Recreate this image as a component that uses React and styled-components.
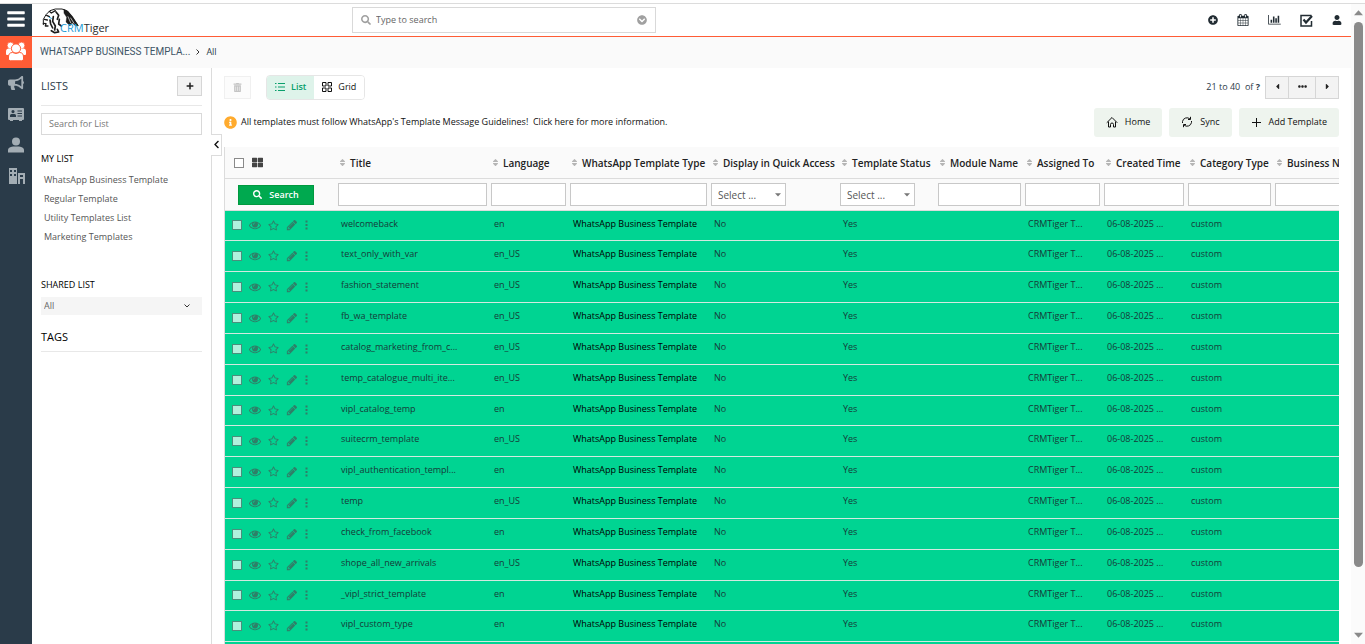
import React, { useState } from 'react';
import styled, { createGlobalStyle } from 'styled-components';
import {
    FaBullhorn, FaUser, FaSearch, FaChevronCircleDown, FaPlusCircle, FaPlus,
    FaChevronLeft, FaTrashAlt, FaInfoCircle, FaCaretLeft, FaCaretRight, FaEllipsisH,
    FaThLarge, FaSort, FaRegStar, FaBars,
} from 'react-icons/fa';

const GlobalStyle = createGlobalStyle`
    * {
        box-sizing: border-box;
    }

    body {
        margin: 0;
        font-family: "Open Sans", sans-serif;
        font-size: 9px;
        line-height: 12px;
        color: #2c3b49;
        background: #fff;
    }

    button, input, select {
        font: inherit;
        color: inherit;
        margin: 0;
        border-radius: 0;
    }

    button {
        padding: 0;
        cursor: pointer;
    }

    a {
        color: inherit;
        text-decoration: none;
    }

    svg {
        display: block;
        flex: none;
    }
`;

const Page = styled.div`
    height: 100vh;
    display: flex;
    padding-top: 3px;
    overflow: hidden;
`;

/* left rail */

const Rail = styled.nav`
    width: 32px;
    flex: none;
    border-top: 1px solid #dcdcdc;
    background: #2a3b49;
`;

const RailButton = styled.button`
    display: flex;
    align-items: center;
    justify-content: center;
    width: 32px;
    height: ${props => props.$tall ? '32px' : '31px'};
    padding-bottom: 2px;
    border: 0;
    font-size: ${props => props.$size || '16px'};
    color: ${props => props.$bright ? '#fff' : '#a3adb4'};
    background: ${props => props.$active ? '#ff5c35' : 'transparent'};
`;

const Shell = styled.div`
    flex: 1;
    min-width: 0;
    border-top: 1px solid #dcdcdc;
`;

/* header */

const TopBar = styled.header`
    display: flex;
    align-items: center;
    height: 33px;
    padding: 0 9px 0 8px;
    border-bottom: 1px solid #ff5c35;
`;

const LogoLink = styled.a`
    display: flex;
    align-items: flex-end;
    width: 312px;
    height: 32px;
    padding: 0 0 1px 2px;
`;

const LogoText = styled.span`
    margin-left: -19px;
    font-size: 11px;
    line-height: 14px;
    color: #2b2b2b;

    b {
        font-weight: 400;
        color: #1a9ad6;
    }
`;

const GlobalSearch = styled.label`
    display: flex;
    align-items: center;
    gap: 5px;
    width: 304px;
    height: 26px;
    padding: 0 8px;
    border: 1px solid #d9d9d9;
    color: #a0a0a0;
    font-size: 10px;

    input {
        flex: 1;
        min-width: 0;
        padding: 0;
        border: 0;
        outline: 0;
        font-size: 9px;
        color: #555;
    }

    input::placeholder {
        color: #666;
        opacity: 1;
    }
`;

const TopActions = styled.div`
    display: flex;
    align-items: center;
    gap: 19px;
    margin-left: auto;
`;

const IconButton = styled.button`
    display: flex;
    border: 0;
    background: none;
    color: ${props => props.$color || '#222c33'};
    font-size: ${props => props.$size || '10px'};
`;

const Breadcrumb = styled.div`
    display: flex;
    align-items: center;
    gap: 5px;
    height: 31px;
    padding: 0 8px 2px;
    background: #fafafa;
`;

const ModuleName = styled.h1`
    margin: 0;
    font-family: Roboto, "Open Sans", sans-serif;
    font-size: 10px;
    font-weight: 400;
    line-height: 16px;
    color: #3f5566;
`;

const Columns = styled.div`
    display: flex;
    align-items: stretch;
    height: 100%;
`;

/* lists panel */

const ListPanel = styled.aside`
    width: 180px;
    flex: none;
    padding: 8px 9px 0 9px;
    border-right: 1px solid #dcdcdc;
    position: relative;
`;

const PanelHead = styled.div`
    display: flex;
    align-items: center;
    justify-content: space-between;
    height: 30px;
    padding-bottom: 9px;
    border-bottom: 1px solid #e8e8e8;
    font-size: 11px;
`;

const AddListButton = styled.button`
    display: flex;
    align-items: center;
    justify-content: center;
    width: 25px;
    height: 20px;
    border: 1px solid #d6d6d6;
    background: #f3f3f3;
    color: #222;
    font-size: 8px;
`;

const ListSearch = styled.input`
    display: block;
    width: 100%;
    height: 22px;
    margin-top: 7px;
    padding: 0 7px 1px;
    border: 1px solid #d9d9d9;

    &::placeholder {
        color: #777;
        opacity: 1;
    }
`;

const PanelTitle = styled.h2`
    margin: ${props => props.$top} 0 0;
    font-size: ${props => props.$large ? '11px' : '9px'};
    font-weight: 400;
    line-height: 14px;
    color: #000;
`;

const Lists = styled.ul`
    margin: 4px 0 0;
    padding: 0 3px;
    list-style: none;
    color: #555;

    li {
        line-height: 19px;
    }
`;

const SharedSelect = styled.div`
    display: flex;
    align-items: center;
    height: 18px;
    margin-top: 5px;
    padding-right: 12px;
    background: #f5f5f5;
    color: #666;

    select {
        flex: 1;
        appearance: none;
        padding: 0 3px 1px;
        border: 0;
        background: none;
    }
`;

const Divider = styled.hr`
    margin: 7px 0 0;
    border: 0;
    border-top: 1px solid #e8e8e8;
`;

const CollapseButton = styled.button`
    position: absolute;
    top: 66px;
    right: -11px;
    display: flex;
    align-items: center;
    justify-content: center;
    width: 11px;
    height: 22px;
    padding-bottom: 2px;
    border: 1px solid #dcdcdc;
    border-left: 0;
    background: #fff;
    font-size: 9px;
    color: #111;
`;

/* content */

const Content = styled.main`
    flex: 1;
    min-width: 0;
    padding: 7px 12px 0 12px;
`;

const Toolbar = styled.div`
    display: flex;
    align-items: center;
    height: 25px;
`;

const TrashButton = styled.button`
    display: flex;
    align-items: center;
    justify-content: center;
    width: 27px;
    height: 23px;
    margin-right: 15px;
    border: 1px solid #f0f0f0;
    background: #fcfcfc;
    color: #c4c4c4;
    font-size: 9px;
`;

const ViewSwitch = styled.div`
    display: flex;
    height: 25px;
    border: 1px solid #e6e6e6;
    border-radius: 4px;
    overflow: hidden;
`;

const ViewButton = styled.button`
    display: flex;
    align-items: center;
    gap: 6px;
    padding: 0 8px 1px;
    border: 0;
    font-weight: ${props => props.$active ? 600 : 400};
    color: ${props => props.$active ? '#0a9f6c' : '#111'};
    background: ${props => props.$active ? '#def3ea' : '#fff'};
`;

const Pager = styled.div`
    display: flex;
    align-items: center;
    margin-left: auto;

    span {
        margin-right: 5px;
        padding-bottom: 2px;
        white-space: pre;
    }
`;

const PagerButton = styled.button`
    display: flex;
    align-items: center;
    justify-content: center;
    width: ${props => props.$wide ? '28px' : '24px'};
    height: 23px;
    margin-right: -1px;
    padding-bottom: 2px;
    border: 1px solid #d6d6d6;
    background: #f3f3f3;
    color: #222;
    font-size: 9px;

    &:last-child {
        margin-right: 0;
    }
`;

const NoticeRow = styled.div`
    display: flex;
    align-items: center;
    height: 29px;
    margin-top: 8px;
    color: #111;
`;

const Notice = styled.p`
    display: flex;
    align-items: center;
    gap: 4px;
    margin: 0;
    white-space: pre;

    span {
        padding-bottom: 2px;
    }
`;

const Actions = styled.div`
    display: flex;
    gap: 7px;
    margin-left: auto;
`;

const ActionButton = styled.button`
    display: flex;
    align-items: center;
    gap: 7px;
    height: 29px;
    padding: 0 12px 1px;
    border: 0;
    border-radius: 3px;
    background: #eef4ee;
    color: #111;
`;

/* table */

const TableWrap = styled.div`
    margin-top: 10px;
    border-left: 1px solid #dcdcdc;
    overflow: hidden;
`;

const Table = styled.table`
    table-layout: fixed;
    width: 1178px;
    border-collapse: separate;
    border-spacing: 0;
`;

const Col = styled.col`
    width: ${props => props.$width};
`;

const HeadCell = styled.th`
    height: 32px;
    padding: 0 2px;
    border-bottom: 1px solid #dcdcdc;
    background: #fafafa;
    font-size: 10px;
    font-weight: 600;
    text-align: left;
    white-space: nowrap;
    color: #222;
`;

const HeadLabel = styled.div`
    display: flex;
    align-items: center;
    gap: ${props => props.$first ? '8px' : '3px'};
    padding-left: ${props => props.$first ? '7px' : '0'};

    svg {
        color: ${props => props.$first ? '#444' : '#b5b5b5'};
    }
`;

const FilterCell = styled.td`
    height: 32px;
    padding: 0 2px;
    border-bottom: 1px solid #dcdcdc;
    background: #fafafa;
`;

const FilterInput = styled.input`
    display: block;
    width: 100%;
    height: 23px;
    padding: 0 6px;
    border: 1px solid #c8c8c8;
    background: #fff;
`;

const FilterSelect = styled.div`
    display: flex;
    align-items: center;
    width: 75px;
    height: 23px;
    padding-right: 4px;
    border: 1px solid #c8c8c8;
    background: #fff;
    color: #777;

    select {
        flex: 1;
        min-width: 0;
        appearance: none;
        padding: 0 6px;
        border: 0;
        background: none;
        font-size: 10px;
        color: #555;
    }
`;

const SearchButton = styled.button`
    display: flex;
    align-items: center;
    justify-content: center;
    gap: 7px;
    width: 76px;
    height: 20px;
    margin-left: 11px;
    border: 1px solid #00993f;
    background: #00a94f;
    color: #fff;
    font-size: 9px;
    font-weight: 600;
`;

const Row = styled.tr`
    height: 31px;
    background: #00d492;

    &:nth-child(6n + 1) {
        height: 30px;
    }
`;

const Cell = styled.td`
    padding: 0 5px 4px;
    border-bottom: 1px solid #d3e9e0;
    white-space: nowrap;
    color: ${props => props.$strong ? '#000' : '#163a38'};
`;

const RowTools = styled.div`
    display: flex;
    align-items: center;
    gap: 7px;
    padding: 3px 0 0 2px;
`;

const Checkbox = styled.input`
    appearance: none;
    flex: none;
    width: 10px;
    height: 10px;
    border: 1px solid ${props => props.$row ? '#4a8f7c' : '#8a8a8a'};
    background: ${props => props.$row ? '#b0f1dd' : '#fff'};
`;

/* page scrollbar */

const ScrollTrack = styled.div`
    display: flex;
    flex-direction: column;
    align-items: center;
    width: 14px;
    flex: none;
    padding: 4px 0 4px;
    border-top: 1px solid #dcdcdc;
    background: #fbfbfb;
    color: #8a8a8a;
`;

const ScrollThumb = styled.div`
    width: 9px;
    height: 90%;
    max-height: 545px;
    margin-top: 5px;
    margin-bottom: auto;
    border-radius: 5px;
    background: #8a8a8a;
`;

const TigerMark = () => (
    <svg width="37" height="27" viewBox="0 0 111 81" fill="none" stroke="#1c1c1c" strokeLinecap="round" strokeLinejoin="round">
        <path d="M4 50 L4 34 L12 20 L24 8 L40 3 L60 3 L76 9 L90 26 L108 52" strokeWidth="3" />
        <path d="M66 4 L78 10 L92 26 L109 54 L98 52 L90 44 L84 54 L72 42 L74 28 L66 16 Z" fill="#1c1c1c" strokeWidth="1" />
        <path d="M78 26 L86 44 M86 30 L96 46" stroke="#fff" strokeWidth="2" />
        <path d="M22 10 L28 15 L40 8 M14 22 L22 26 M7 34 L16 36 M4 46 L12 47 L10 54 L18 54" strokeWidth="4" />
        <path d="M42 12 L50 22 L46 34 M34 26 L32 40 L40 54 L38 66 M24 36 L26 48 L32 60 M52 34 L50 48 L58 54" strokeWidth="5" />
        <path d="M28 68 L38 74 L50 72 L46 64" strokeWidth="5" />
        <path d="M22 28 L28 31" stroke="#1a9ad6" strokeWidth="3" />
    </svg>
);

const UsersIcon = () => (
    <svg width="20" height="19" viewBox="0 0 20 19" fill="currentColor" stroke="#ff5c35">
        <circle cx="4.500" cy="3.500" r="3.400" strokeWidth=".8" />
        <circle cx="15.500" cy="3.500" r="3.400" strokeWidth=".8" />
        <path d="M0 12V9.500Q0 6.500 3 6.500h14q3 0 3 3V12q0 1-1 1H1q-1 0-1-1z" strokeWidth="0" />
        <circle cx="10" cy="6.500" r="4.600" strokeWidth="1" />
        <path d="M2.500 17v-2q0-4.500 4-4.500Q10 12.500 13.500 10.500q4 0 4 4.500v2q0 1.800-1.800 1.800H4.300Q2.500 18.800 2.500 17z" strokeWidth="1" />
    </svg>
);

const PersonIcon = () => (
    <svg width="16" height="16" viewBox="0 0 16 16" fill="currentColor">
        <circle cx="8" cy="4.500" r="4" />
        <path d="M0 15.500V13q0-3 5-3.500h6q5 .5 5 3.500v2.500z" />
    </svg>
);

const BuildingIcon = () => (
    <svg width="17" height="16" viewBox="0 0 17 16" fill="currentColor">
        <path fillRule="evenodd" d="M1 0h8v16H1zM2 2v2h2V2zM6 2v2h2V2zM2 6v2h2V6zM6 6v2h2V6z" />
        <path fillRule="evenodd" d="M10 5h7v11h-2v-5h-3v5h-2zM12 7v2h3V7z" />
    </svg>
);

const ContactIcon = () => (
    <svg width="16" height="14" viewBox="0 0 16 14">
        <path fill="currentColor" d="M1 1h14q1 0 1 1v10q0 1-1 1h-1v1h-3v-1H5v1H2v-1H1q-1 0-1-1V2q0-1 1-1z" />
        <path fill="#2a3b49" d="M5 3a1.500 1.500 0 1 1 0 3.200A1.500 1.500 0 0 1 5 3zM2 10V8.500q0-1.500 1.500-1.500h3Q8 7 8 8.500V10zM9.500 3.500H14v1H9.500zM9.500 6H14v1H9.500zM9.500 8.500H14v1H9.500z" />
    </svg>
);

const CalendarIcon = () => (
    <svg width="12" height="12" viewBox="0 0 1792 1792" fill="currentColor">
        <path d="M192 1664h288v-288h-288v288zm352 0h320v-288h-320v288zm-352-352h288v-320h-288v320zm352 0h320v-320h-320v320zm-352-384h288v-288h-288v288zm736 736h320v-288h-320v288zm-384-736h320v-288h-320v288zm768 736h288v-288h-288v288zm-384-352h320v-320h-320v320zm-352-864v-288q0-13-9.500-22.500t-22.500-9.500h-64q-13 0-22.500 9.500t-9.500 22.500v288q0 13 9.500 22.500t22.500 9.500h64q13 0 22.500-9.500t9.500-22.500zm736 864h288v-320h-288v320zm-384-384h320v-288h-320v288zm384 0h288v-288h-288v288zm32-480v-288q0-13-9.500-22.500t-22.500-9.500h-64q-13 0-22.500 9.500t-9.500 22.500v288q0 13 9.500 22.500t22.500 9.500h64q13 0 22.500-9.500t9.500-22.500zm384-64v1280q0 52-38 90t-90 38h-1408q-52 0-90-38t-38-90v-1280q0-52 38-90t90-38h128v-96q0-66 47-113t113-47h64q66 0 113 47t47 113v96h384v-96q0-66 47-113t113-47h64q66 0 113 47t47 113v96h128q52 0 90 38t38 90z" />
    </svg>
);

const ChartIcon = () => (
    <svg width="13" height="11" viewBox="0 0 2048 1792" fill="currentColor">
        <path d="M640 768v512h-256v-512h256zm384-512v1024h-256v-1024h256zm1024 1152v128h-2048v-1536h128v1408h1920zm-640-896v768h-256v-768h256zm384-384v1152h-256v-1152h256z" />
    </svg>
);

const TaskIcon = () => (
    <svg width="13" height="13" viewBox="0 0 13 13" fill="none" stroke="currentColor">
        <path d="M11.500 7v5H1V1.500h10.500" strokeWidth="1.500" />
        <path d="M3.500 5.500 6 8.500 12 2" strokeWidth="2.200" />
    </svg>
);

const EyeIcon = () => (
    <svg width="12" height="12" viewBox="0 0 1792 1792" fill="currentColor">
        <path d="M1664 960q-152-236-381-353 61 104 61 225 0 185-131.500 316.500t-316.500 131.500-316.500-131.500-131.500-316.500q0-121 61-225-229 117-381 353 133 205 333.500 326.500t434.500 121.500 434.500-121.500 333.500-326.500zm-720-384q0-20-14-34t-34-14q-125 0-214.500 89.500t-89.500 214.500q0 20 14 34t34 14 34-14 14-34q0-86 61-147t147-61q20 0 34-14t14-34zm848 384q0 34-20 69-140 230-376.500 368.500t-499.500 138.500-499.500-139-376.500-368q-20-35-20-69t20-69q140-229 376.500-368t499.500-139 499.500 139 376.500 368q20 35 20 69z" />
    </svg>
);

const PencilIcon = () => (
    <svg width="12" height="12" viewBox="0 0 1792 1792" fill="currentColor">
        <path d="M491 1536l91-91-235-235-91 91v107h128v128h107zm523-928q0-22-22-22-10 0-17 7l-542 542q-7 7-7 17 0 22 22 22 10 0 17-7l542-542q7-7 7-17zm-54-192l416 416-832 832h-416v-416zm683 96q0 53-37 90l-166 166-416-416 166-165q36-38 90-38 53 0 91 38l235 234q37 39 37 91z" />
    </svg>
);

const ListIcon = () => (
    <svg width="10" height="10" viewBox="0 0 10 10" fill="currentColor">
        <path d="M0 1h1.500v1H0zM3 1h7v1H3zM0 4.500h1.500v1H0zM3 4.500h7v1H3zM0 8h1.500v1H0zM3 8h7v1H3z" />
    </svg>
);

const GridIcon = () => (
    <svg width="10" height="10" viewBox="0 0 10 10" fill="none" stroke="currentColor">
        <path d="M.5.5h3.500v3.500H.5zM6 .5h3.500v3.500H6zM.5 6h3.500v3.500H.5zM6 6h3.500v3.500H6z" />
    </svg>
);

const HomeIcon = () => (
    <svg width="12" height="12" viewBox="0 0 12 12" fill="none" stroke="currentColor" strokeLinejoin="round" strokeLinecap="round">
        <path d="M1 6.500 6 1.500l5 5M2.500 6v5h2V8.500a1.500 1.500 0 0 1 3 0V11h2V6" />
    </svg>
);

const SyncIcon = () => (
    <svg width="12" height="12" viewBox="0 0 12 12" fill="none" stroke="currentColor">
        <path d="M1.500 7V5.500a4.500 4.500 0 0 1 7.500-2.500M10.500 5v1.500A4.500 4.500 0 0 1 3 9M9.500 .8V3.500H7M2.500 11.200V8.500H5" />
    </svg>
);

const ThinPlusIcon = () => (
    <svg width="11" height="11" viewBox="0 0 11 11" stroke="currentColor">
        <path d="M5.500 1v9M1 5.500h9" />
    </svg>
);

const DotsIcon = () => (
    <svg width="3" height="10" viewBox="0 0 3 10" fill="currentColor">
        <path d="M.5.5h2v2h-2zM.5 4h2v2h-2zM.5 7.500h2v2h-2z" />
    </svg>
);

const ChevronIcon = ({ down }) => (
    <svg width="6" height="6" viewBox="0 0 6 6" fill="none" stroke="#333">
        <path d={down ? 'M.5 1.500 3 4l2.500-2.500' : 'M1.500.5 4 3 1.500 5.500'} />
    </svg>
);

const Triangle = ({ up, size = 9 }) => (
    <svg width={size} height={size} viewBox="0 0 8 8" fill="currentColor">
        <path d={up ? 'M0 6.500 4 2l4 4.500z' : 'M0 1.500h8L4 6z'} />
    </svg>
);

const columns = [
    { label: 'Title', width: '153px' },
    { label: 'Language', width: '79px' },
    { label: 'WhatsApp Template Type', width: '141px' },
    { label: 'Display in Quick Access', width: '129px', select: true },
    { label: 'Template Status', width: '98px', select: true },
    { label: 'Module Name', width: '87px' },
    { label: 'Assigned To', width: '79px' },
    { label: 'Created Time', width: '84px' },
    { label: 'Category Type', width: '87px' },
    { label: 'Business Number', width: '130px' },
];

const templates = [
    ['welcomeback', 'en'],
    ['text_only_with_var', 'en_US'],
    ['fashion_statement', 'en_US'],
    ['fb_wa_template', 'en_US'],
    ['catalog_marketing_from_c...', 'en_US'],
    ['temp_catalogue_multi_ite...', 'en_US'],
    ['vipl_catalog_temp', 'en'],
    ['suitecrm_template', 'en_US'],
    ['vipl_authentication_templ...', 'en'],
    ['temp', 'en_US'],
    ['check_from_facebook', 'en'],
    ['shope_all_new_arrivals', 'en_US'],
    ['_vipl_strict_template', 'en'],
    ['vipl_custom_type', 'en'],
    ['', ''],
];

const lists = ['WhatsApp Business Template', 'Regular Template', 'Utility Templates List', 'Marketing Templates'];

const TemplateRow = ({ name, language }) => (
    <Row>
        <Cell>
            {name && (
                <RowTools>
                    <Checkbox $row type="checkbox" aria-label={name} />
                    <IconButton $color="#2f7f68" aria-label="View"><EyeIcon /></IconButton>
                    <IconButton $color="#2f7f68" $size="11px" aria-label="Follow"><FaRegStar /></IconButton>
                    <IconButton $color="#2f7f68" aria-label="Edit"><PencilIcon /></IconButton>
                    <IconButton $color="#2f7f68" aria-label="More"><DotsIcon /></IconButton>
                </RowTools>
            )}
        </Cell>
        <Cell>{name}</Cell>
        <Cell>{language}</Cell>
        <Cell $strong>{name && 'WhatsApp Business Template'}</Cell>
        <Cell>{name && 'No'}</Cell>
        <Cell>{name && 'Yes'}</Cell>
        <Cell />
        <Cell>{name && 'CRMTiger T...'}</Cell>
        <Cell>{name && '06-08-2025 ...'}</Cell>
        <Cell>{name && 'custom'}</Cell>
        <Cell />
    </Row>
);

const App = () => {

    const [view, setView] = useState('list');

    return (
        <>
            <GlobalStyle />
            <Page>
                <Rail>
                    <RailButton $tall $bright $size="20px" aria-label="Menu"><FaBars /></RailButton>
                    <RailButton $tall $bright $active aria-label="Templates"><UsersIcon /></RailButton>
                    <RailButton aria-label="Campaigns"><FaBullhorn /></RailButton>
                    <RailButton aria-label="Contacts"><ContactIcon /></RailButton>
                    <RailButton aria-label="Leads"><PersonIcon /></RailButton>
                    <RailButton aria-label="Organizations"><BuildingIcon /></RailButton>
                </Rail>
                <Shell>
                    <TopBar>
                        <LogoLink href="#">
                            <TigerMark />
                            <LogoText><b>CRM</b>Tiger</LogoText>
                        </LogoLink>
                        <GlobalSearch>
                            <FaSearch />
                            <input type="text" placeholder="Type to search" aria-label="Type to search" />
                            <FaChevronCircleDown />
                        </GlobalSearch>
                        <TopActions>
                            <IconButton aria-label="Quick create"><FaPlusCircle /></IconButton>
                            <IconButton aria-label="Calendar"><CalendarIcon /></IconButton>
                            <IconButton aria-label="Reports"><ChartIcon /></IconButton>
                            <IconButton aria-label="Tasks"><TaskIcon /></IconButton>
                            <IconButton aria-label="Profile"><FaUser /></IconButton>
                        </TopActions>
                    </TopBar>
                    <Breadcrumb>
                        <ModuleName>WHATSAPP BUSINESS TEMPLA...</ModuleName>
                        <ChevronIcon />
                        <a href="#">All</a>
                    </Breadcrumb>
                    <Columns>
                        <ListPanel>
                            <PanelHead>
                                LISTS
                                <AddListButton aria-label="Add list"><FaPlus /></AddListButton>
                            </PanelHead>
                            <ListSearch type="text" placeholder="Search for List" aria-label="Search for List" />
                            <PanelTitle $top="17px">MY LIST</PanelTitle>
                            <Lists>
                                {lists.map(name => <li key={name}><a href="#">{name}</a></li>)}
                            </Lists>
                            <PanelTitle $top="32px">SHARED LIST</PanelTitle>
                            <SharedSelect>
                                <select aria-label="Shared list">
                                    <option>All</option>
                                </select>
                                <ChevronIcon down />
                            </SharedSelect>
                            <PanelTitle $large $top="15px">TAGS</PanelTitle>
                            <Divider />
                            <CollapseButton aria-label="Collapse"><FaChevronLeft /></CollapseButton>
                        </ListPanel>
                        <Content>
                            <Toolbar>
                                <TrashButton aria-label="Delete"><FaTrashAlt /></TrashButton>
                                <ViewSwitch>
                                    <ViewButton $active={view === 'list'} onClick={() => setView('list')}>
                                        <ListIcon /> List
                                    </ViewButton>
                                    <ViewButton $active={view === 'grid'} onClick={() => setView('grid')}>
                                        <GridIcon /> Grid
                                    </ViewButton>
                                </ViewSwitch>
                                <Pager>
                                    <span>21 to 40  of <b>?</b></span>
                                    <PagerButton aria-label="Previous"><FaCaretLeft /></PagerButton>
                                    <PagerButton $wide aria-label="Jump to page"><FaEllipsisH /></PagerButton>
                                    <PagerButton aria-label="Next"><FaCaretRight /></PagerButton>
                                </Pager>
                            </Toolbar>
                            <NoticeRow>
                                <Notice>
                                    <FaInfoCircle size={13} color="#ffab2e" />
                                    <span>All templates must follow WhatsApp's Template Message Guidelines!  <a href="#">Click here for more information.</a></span>
                                </Notice>
                                <Actions>
                                    <ActionButton><HomeIcon /> Home</ActionButton>
                                    <ActionButton><SyncIcon /> Sync</ActionButton>
                                    <ActionButton><ThinPlusIcon /> Add Template</ActionButton>
                                </Actions>
                            </NoticeRow>
                            <TableWrap>
                                <Table>
                                    <colgroup>
                                        <Col $width="111px" />
                                        {columns.map(col => <Col key={col.label} $width={col.width} />)}
                                    </colgroup>
                                    <thead>
                                        <tr>
                                            <HeadCell>
                                                <HeadLabel $first>
                                                    <Checkbox type="checkbox" aria-label="Select all" />
                                                    <FaThLarge size={11} />
                                                </HeadLabel>
                                            </HeadCell>
                                            {columns.map(col => (
                                                <HeadCell key={col.label}>
                                                    <HeadLabel><FaSort size={9} />{col.label}</HeadLabel>
                                                </HeadCell>
                                            ))}
                                        </tr>
                                        <tr>
                                            <FilterCell>
                                                <SearchButton><FaSearch /> Search</SearchButton>
                                            </FilterCell>
                                            {columns.map(col => (
                                                <FilterCell key={col.label}>
                                                    {col.select ? (
                                                        <FilterSelect>
                                                            <select aria-label={col.label}>
                                                                <option>Select ...</option>
                                                            </select>
                                                            <Triangle size={6} />
                                                        </FilterSelect>
                                                    ) : <FilterInput type="text" aria-label={col.label} />}
                                                </FilterCell>
                                            ))}
                                        </tr>
                                    </thead>
                                    <tbody>
                                        {templates.map(([name, language]) => (
                                            <TemplateRow key={name} name={name} language={language} />
                                        ))}
                                    </tbody>
                                </Table>
                            </TableWrap>
                        </Content>
                    </Columns>
                </Shell>
                <ScrollTrack>
                    <Triangle up />
                    <ScrollThumb />
                    <Triangle />
                </ScrollTrack>
            </Page>
        </>
    )
};

export default App
